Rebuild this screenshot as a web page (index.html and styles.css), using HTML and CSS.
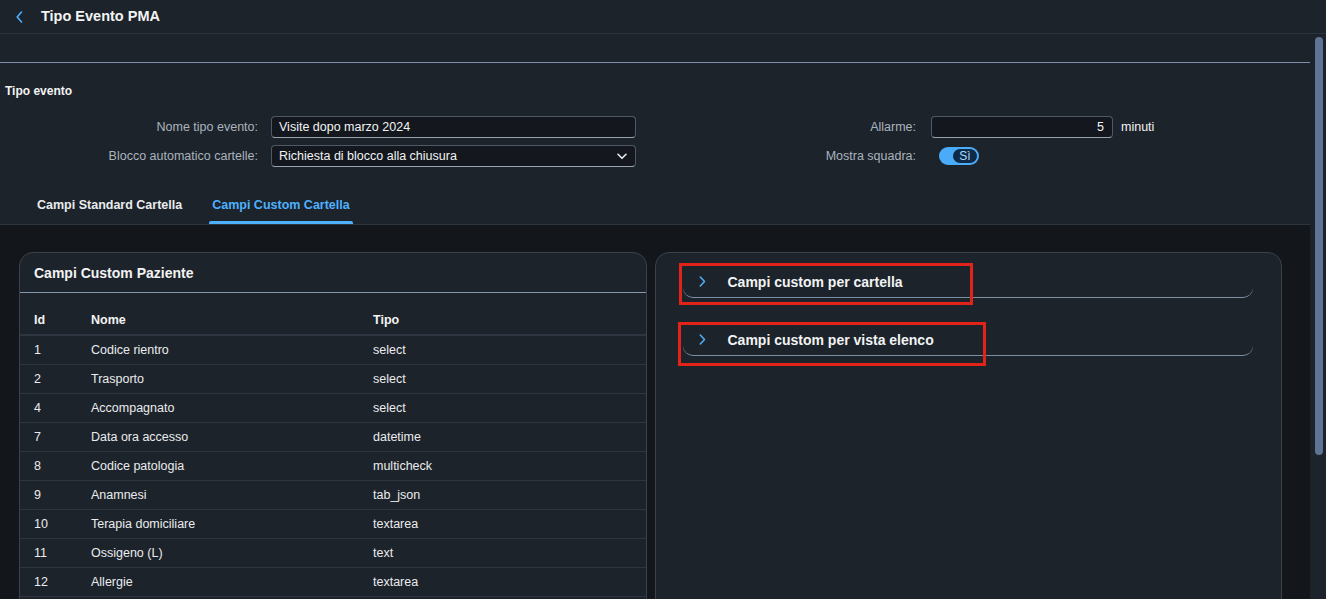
FILE: index.html
```html
<!DOCTYPE html>
<html lang="it">
<head>
<meta charset="utf-8">
<title>Tipo Evento PMA</title>
<link rel="stylesheet" href="styles.css">
</head>
<body>
<header class="shellbar">
  <button class="back" aria-label="Indietro">
    <svg width="7" height="12" viewBox="0 0 7 12"><polyline points="5.5,1 1.2,6 5.5,11" fill="none" stroke="#4db1ff" stroke-width="1.6" stroke-linecap="round" stroke-linejoin="round"/></svg>
  </button>
  <h1 class="title">Tipo Evento PMA</h1>
</header>
<div class="page">
  <main class="scroll">
    <div class="spacer"></div>
    <section class="obj-header">
      <h2 class="section-title">Tipo evento</h2>
      <div class="form">
        <div class="form-col form-left">
          <label class="lbl">Nome tipo evento:</label>
          <div class="input">Visite dopo marzo 2024</div>
          <label class="lbl">Blocco automatico cartelle:</label>
          <div class="input select"><span>Richiesta di blocco alla chiusura</span>
            <svg width="10" height="7" viewBox="0 0 10 7"><polyline points="1,1.3 5,5.3 9,1.3" fill="none" stroke="#eaecee" stroke-width="1.6" stroke-linecap="round" stroke-linejoin="round"/></svg>
          </div>
        </div>
        <div class="form-col form-right">
          <label class="lbl">Allarme:</label>
          <div class="unit-field"><div class="input num">5</div><span class="unit">minuti</span></div>
          <label class="lbl">Mostra squadra:</label>
          <div class="switch-cell"><div class="switch"><span class="knob">Sì</span></div></div>
        </div>
      </div>
    </section>
    <nav class="tabs">
      <div class="tab">Campi Standard Cartella</div>
      <div class="tab active">Campi Custom Cartella</div>
    </nav>
    <div class="content">
      <section class="card">
        <h3 class="card-title">Campi Custom Paziente</h3>
        <table class="grid">
          <colgroup><col class="c-id"><col class="c-nome"><col></colgroup>
          <thead><tr><th>Id</th><th>Nome</th><th>Tipo</th></tr></thead>
          <tbody>
            <tr><td>1</td><td>Codice rientro</td><td>select</td></tr>
            <tr><td>2</td><td>Trasporto</td><td>select</td></tr>
            <tr><td>4</td><td>Accompagnato</td><td>select</td></tr>
            <tr><td>7</td><td>Data ora accesso</td><td>datetime</td></tr>
            <tr><td>8</td><td>Codice patologia</td><td>multicheck</td></tr>
            <tr><td>9</td><td>Anamnesi</td><td>tab_json</td></tr>
            <tr><td>10</td><td>Terapia domiciliare</td><td>textarea</td></tr>
            <tr><td>11</td><td>Ossigeno (L)</td><td>text</td></tr>
            <tr><td>12</td><td>Allergie</td><td>textarea</td></tr>
          </tbody>
        </table>
      </section>
      <section class="card panels">
        <div class="panel p1">
          <div class="panel-head">
            <svg class="chev" width="7" height="11" viewBox="0 0 7 11"><polyline points="1.3,1 5.5,5.5 1.3,10" fill="none" stroke="#4db1ff" stroke-width="1.5" stroke-linecap="round" stroke-linejoin="round"/></svg>
            <span class="panel-title">Campi custom per cartella</span>
          </div>
          <div class="mark mark1"></div>
        </div>
        <div class="panel p2">
          <div class="panel-head">
            <svg class="chev" width="7" height="11" viewBox="0 0 7 11"><polyline points="1.3,1 5.5,5.5 1.3,10" fill="none" stroke="#4db1ff" stroke-width="1.5" stroke-linecap="round" stroke-linejoin="round"/></svg>
            <span class="panel-title">Campi custom per vista elenco</span>
          </div>
          <div class="mark mark2"></div>
        </div>
      </section>
    </div>
  </main>
  <div class="scrollbar"><div class="thumb"></div></div>
</div>
</body>
</html>
```
FILE: styles.css
```css
* { box-sizing: border-box; margin: 0; padding: 0; }
html, body { height: 100%; }
body {
  background: #1d232a;
  color: #eaecee;
  font-family: "Liberation Sans", Arial, sans-serif;
  font-size: 12.5px;
  overflow: hidden;
}

/* shell bar */
.shellbar {
  height: 34px;
  display: flex;
  align-items: center;
  border-bottom: 1px solid #2c333c;
  background: #1d232a;
}
.back {
  width: 41px;
  height: 33px;
  display: flex;
  align-items: center;
  justify-content: center;
  background: none;
  border: 0;
  padding-right: 2px;
}
.title {
  font-size: 14.5px;
  font-weight: bold;
  color: #f2f3f4;
  padding-bottom: 2px;
}

/* page */
.page { display: flex; height: calc(100% - 34px); }
.scroll {
  flex: 1;
  min-width: 0;
  overflow: hidden;
  display: flex;
  flex-direction: column;
}
.spacer { height: 28px; flex: none; }

.obj-header {
  border-top: 1px solid #7b91ab;
  padding: 20px 0 18px;
  flex: none;
}
.section-title {
  font-size: 12px;
  font-weight: bold;
  line-height: 16px;
  padding-left: 5px;
  margin-bottom: 17px;
  color: #f2f3f4;
}
.form { display: flex; }
.form-col {
  display: grid;
  row-gap: 7px;
  align-items: center;
}
.form-left { grid-template-columns: 258px 365px; column-gap: 13px; }
.form-right { grid-template-columns: 280px auto; column-gap: 15px; }
.lbl {
  text-align: right;
  color: #a9b4be;
  line-height: 22px;
}
.input {
  height: 22px;
  background: #14181e;
  border: 1px solid #4f5966;
  border-bottom-color: #98a3b0;
  border-radius: 4px;
  padding: 0 7px;
  display: flex;
  align-items: center;
  color: #f2f3f4;
}
.select { justify-content: space-between; padding-right: 8px; }
.unit-field { display: flex; align-items: center; gap: 8px; }
.num { width: 182px; justify-content: flex-end; padding-right: 8px; }
.unit { color: #f2f3f4; }
.switch-cell { height: 22px; display: flex; align-items: center; }
.switch {
  margin-left: 8px;
  width: 40px;
  height: 18px;
  border-radius: 9px;
  background: #4aacf8;
  display: flex;
  justify-content: flex-end;
  padding: 1px;
}
.knob {
  width: 26px;
  height: 16px;
  border-radius: 8px;
  background: #0e2a47;
  border: 1px solid #4db1ff;
  color: #a8d8ff;
  font-size: 12px;
  display: flex;
  align-items: center;
  justify-content: center;
}

/* tabs */
.tabs {
  height: 40px;
  flex: none;
  display: flex;
  gap: 24px;
  padding-left: 34px;
  border-bottom: 1px solid #2c343d;
}
.tab {
  position: relative;
  height: 39px;
  display: flex;
  align-items: center;
  padding: 1px 3px 0;
  font-weight: bold;
  font-size: 12.5px;
  color: #eaecee;
}
.tab.active { color: #4db1ff; }
.tab.active::after {
  content: "";
  position: absolute;
  left: 0;
  right: 0;
  bottom: 0;
  height: 3px;
  border-radius: 2px 2px 0 0;
  background: #4db1ff;
}

/* content */
.content {
  flex: 1 0 auto;
  background: #13171c;
  padding: 27px 28px 0 19px;
  display: grid;
  grid-template-columns: 1fr 1fr;
  gap: 8px;
}
.card {
  background: #1d232a;
  border: 1px solid #39414b;
  border-radius: 14px 14px 0 0;
  padding-bottom: 60px;
}
.card-title {
  height: 40px;
  border-bottom: 1px solid #8397ad;
  font-size: 14px;
  font-weight: bold;
  display: flex;
  align-items: center;
  padding-left: 14px;
  color: #f2f3f4;
}
.grid {
  width: 100%;
  border-collapse: collapse;
  margin-top: 13px;
}
.c-id { width: 71px; }
.c-nome { width: 282px; }
.grid th {
  height: 29px;
  text-align: left;
  font-weight: bold;
  border-bottom: 2px solid #2e3540;
  color: #f2f3f4;
  padding: 0 0 1px;
}
.grid td {
  height: 29px;
  border-bottom: 1px solid #2e3540;
  padding: 0;
  color: #eaecee;
}
.grid th:first-child, .grid td:first-child { padding-left: 14px; }

/* panels */
.panels { padding: 13px 28px 60px 27px; }
.panel { position: relative; margin-bottom: 26px; }
.panel-head {
  height: 32px;
  border-bottom: 1px solid #7d8fa5;
  border-radius: 0 0 10px 10px;
  display: flex;
  align-items: center;
  padding-left: 16px;
}
.chev { flex: none; margin-right: 22px; }
.panel-title {
  font-size: 14px;
  font-weight: bold;
  color: #f2f3f4;
}
.mark {
  position: absolute;
  border: 3px solid #e2231a;
}
.mark1 { left: -4px; top: -3px; width: 294px; height: 42px; }
.mark2 { left: -5px; top: -2px; width: 308px; height: 44px; }

/* scrollbar */
.scrollbar {
  width: 16px;
  flex: none;
  background: #1d232a;
  padding: 3px 3px 0 5px;
}
.thumb {
  width: 8px;
  height: 418px;
  border-radius: 4px;
  background: #5f7494;
}
```
